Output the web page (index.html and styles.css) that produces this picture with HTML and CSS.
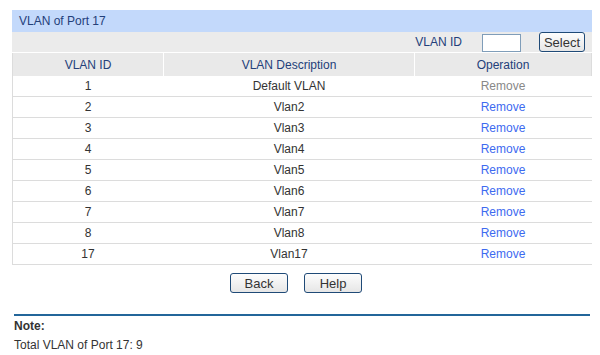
FILE: index.html
```html
<!DOCTYPE html>
<html>
<head>
    <title>VLAN of Port</title>
    <link rel="stylesheet" href="styles.css">
</head>
<body>
    <div class="panel">
        <div class="title-bar">VLAN of Port 17</div>
        <div class="tool-row">
            <span class="tool-label">VLAN ID</span>
            <input type="text" class="vid-input">
            <button class="btn btn-select">Select</button>
        </div>
        <table class="vlan-table">
            <tr class="head">
                <th class="c-id">VLAN ID</th>
                <th class="c-desc">VLAN Description</th>
                <th class="c-op">Operation</th>
            </tr>
            <tr><td>1</td><td>Default VLAN</td><td><span class="op disabled">Remove</span></td></tr>
            <tr><td>2</td><td>Vlan2</td><td><a class="op">Remove</a></td></tr>
            <tr><td>3</td><td>Vlan3</td><td><a class="op">Remove</a></td></tr>
            <tr><td>4</td><td>Vlan4</td><td><a class="op">Remove</a></td></tr>
            <tr><td>5</td><td>Vlan5</td><td><a class="op">Remove</a></td></tr>
            <tr><td>6</td><td>Vlan6</td><td><a class="op">Remove</a></td></tr>
            <tr><td>7</td><td>Vlan7</td><td><a class="op">Remove</a></td></tr>
            <tr><td>8</td><td>Vlan8</td><td><a class="op">Remove</a></td></tr>
            <tr><td>17</td><td>Vlan17</td><td><a class="op">Remove</a></td></tr>
        </table>
        <div class="actions">
            <button class="btn btn-wide">Back</button>
            <button class="btn btn-wide">Help</button>
        </div>
    </div>

    <div class="note">
        <div class="note-title">Note:</div>
        <div class="note-text">Total VLAN of Port 17: 9</div>
    </div>
</body>
</html>
```

FILE: styles.css
```css
body {
    font-family: "Liberation Sans", Arial, sans-serif;
    font-size: 12px;
    color: #333;
    margin: 0;
    padding: 10px 8px 0 12px;
    background-color: #fff;
}

.panel {
    width: 580px;
}

/* Title bar */
.title-bar {
    height: 22px;
    line-height: 22px;
    background-color: #c3d9fb;
    color: #23407a;
    padding-left: 7px;
}

/* VLAN ID select row */
.tool-row {
    height: 20px;
    background-color: #ebebeb;
    border-bottom: 1px solid #fff;
    display: flex;
    align-items: center;
    justify-content: flex-end;
    padding-right: 7px;
}

.tool-label {
    color: #23407a;
    margin-right: 20px;
}

.vid-input {
    width: 37px;
    height: 16px;
    border: 1px solid #7f9db9;
    padding: 0;
    margin: 1px 18px 0 0;
    background: #fff;
}

/* Table */
.vlan-table {
    width: 580px;
    border-collapse: collapse;
    border-left: 1px solid #dcdcdc;
    border-right: 1px solid #dcdcdc;
    table-layout: fixed;
}

.vlan-table th {
    height: 23px;
    padding: 0;
    background-color: #e9e9e9;
    color: #23407a;
    font-weight: normal;
    border-right: 1px solid #fff;
}

.vlan-table th.c-id { width: 150px; }
.vlan-table th.c-desc { width: 250px; }
.vlan-table th.c-op { border-right: none; }

.vlan-table td {
    height: 20px;
    padding: 0;
    text-align: center;
    border-bottom: 1px solid #dcdcdc;
    border-right: 1px solid #fff;
}

.op {
    color: #3d6af0;
    cursor: pointer;
}

.op.disabled {
    color: #888;
    cursor: default;
}

/* Buttons */
.btn {
    font-family: "Liberation Sans", Arial, sans-serif;
    font-size: 13px;
    color: #333;
    height: 20px;
    padding: 0;
    border: 1px solid #1f4a77;
    border-radius: 3px;
    background: linear-gradient(#fdfdfd, #e6e6e6);
}

.btn-select {
    width: 46px;
}

.btn-wide {
    width: 58px;
}

.actions {
    display: flex;
    gap: 16px;
    margin-top: 8px;
    padding-left: 218px;
}

/* Note */
.note {
    margin: 21px 0 0 2px;
    width: 576px;
    border-top: 2px solid #23669a;
}

.note-title {
    font-weight: bold;
    margin-top: 3px;
    line-height: 14px;
}

.note-text {
    margin-top: 5px;
    line-height: 14px;
}
```
